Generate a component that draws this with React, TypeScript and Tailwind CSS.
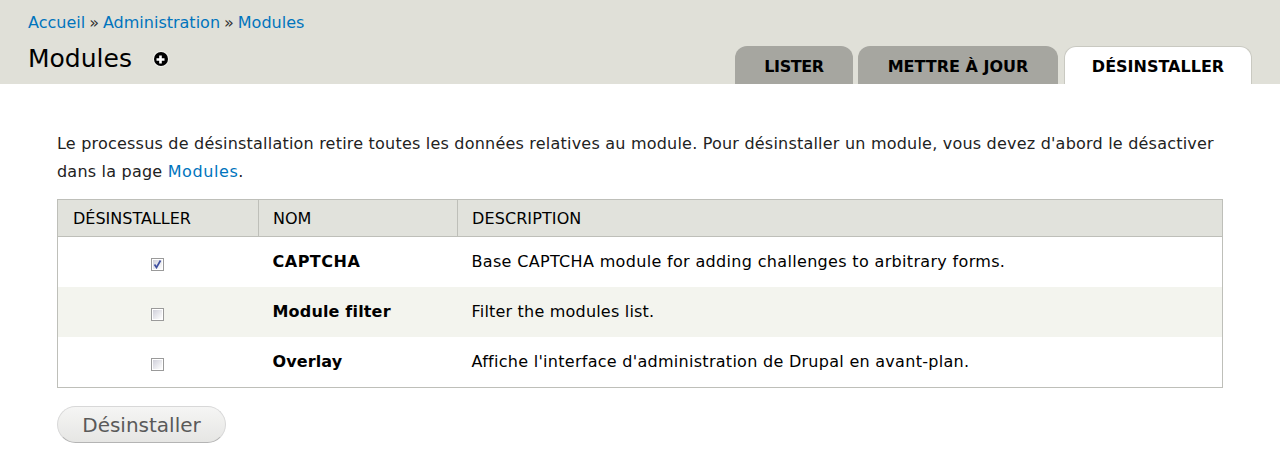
const tabs = [
  { label: "LISTER", width: "w-[118px]", tracking: "tracking-[-0.4px]", active: false },
  { label: "METTRE À JOUR", width: "w-[200px]", tracking: "", active: false },
  { label: "DÉSINSTALLER", width: "ml-[1px] w-[188px]", tracking: "", active: true },
];

const modules = [
  {
    name: "CAPTCHA",
    description: "Base CAPTCHA module for adding challenges to arbitrary forms.",
    checked: true,
    height: "h-[50px]",
    nameTracking: "tracking-[0.5px]",
    descTracking: "tracking-[0.33px]",
  },
  {
    name: "Module filter",
    description: "Filter the modules list.",
    checked: false,
    height: "h-[50px]",
    nameTracking: "tracking-[0.17px]",
    descTracking: "tracking-[0.2px]",
  },
  {
    name: "Overlay",
    description: "Affiche l'interface d'administration de Drupal en avant-plan.",
    checked: false,
    height: "h-[51px]",
    nameTracking: "tracking-[0.12px]",
    descTracking: "tracking-[0.28px]",
  },
];

function Checkbox({ checked }: { checked: boolean }) {
  return (
    <span className="flex h-[13px] w-[13px] border border-[#9a9a9a] bg-white p-[1px]">
      <span className="flex h-full w-full items-center justify-center bg-gradient-to-br from-[#d0d0da] to-white">
        {checked && (
          <svg width="9" height="9" viewBox="0 0 9 9" fill="none" className="shrink-0">
            <path d="M1.5 4.5 L3.5 7.5 L7.5 0.5" stroke="#3f4fa0" strokeWidth="1.7" />
          </svg>
        )}
      </span>
    </span>
  );
}

export default function App() {
  return (
    <div className="h-[475px] w-[1280px] overflow-hidden bg-white font-['DejaVu_Sans',sans-serif] text-[16px] text-black">
      <div className="flex h-[84px] flex-col bg-[#e0e0d8] px-[28px]">
        <div className="flex h-[45px] items-center text-[#0074bd]">
          <a>Accueil</a>
          <span className="mx-[4px] text-[#333]">»</span>
          <a>Administration</a>
          <span className="mx-[4px] text-[#333]">»</span>
          <a>Modules</a>
        </div>
        <div className="flex flex-1 items-end justify-between">
          <div className="flex items-center self-start pt-[1px]">
            <h1 className="text-[25px] leading-[26px] font-normal">Modules</h1>
            <span className="ml-[22px] flex h-[14px] w-[14px] items-center justify-center rounded-full bg-black ring-1 ring-[#f2f2ee]">
              <svg width="9" height="9" viewBox="0 0 9 9">
                <path d="M3.2 0.5h2.6v2.7h2.7v2.6H5.8v2.7H3.2V5.8H0.5V3.2h2.7z" fill="#fff" />
              </svg>
            </span>
          </div>
          <div className="flex gap-[5px]">
            {tabs.map((tab) => (
              <div
                key={tab.label}
                className={`flex h-[38px] items-center justify-center rounded-t-[12px] pt-[3px] font-bold ${tab.width} ${tab.tracking} ${
                  tab.active ? "border border-b-0 border-[#c9c9c1] bg-white" : "bg-[#a6a6a0]"
                }`}
              >
                {tab.label}
              </div>
            ))}
          </div>
        </div>
      </div>

      <div className="px-[57px] pt-[46px]">
        <p className="leading-[28px] tracking-[0.21px] text-[#222]">
          Le processus de désinstallation retire toutes les données relatives au module. Pour désinstaller un module, vous devez d'abord le désactiver dans la page <a className="tracking-[0.6px] text-[#0074bd]">Modules</a>.
        </p>

        <table className="mt-[13px] w-full table-fixed border-collapse border border-[#bebfb9]">
          <thead>
            <tr className="h-[37px] border-b border-[#bebfb9] bg-[#e1e2dc] text-left">
              <th className="w-[201px] border-r border-[#bebfb9] pt-[1px] pl-[15px] font-normal">DÉSINSTALLER</th>
              <th className="w-[199px] border-r border-[#bebfb9] pt-[1px] pl-[14px] font-normal">NOM</th>
              <th className="pt-[1px] pl-[14px] font-normal tracking-[0.1px]">DESCRIPTION</th>
            </tr>
          </thead>
          <tbody>
            {modules.map((mod, i) => (
              <tr key={mod.name} className={`${mod.height} ${i % 2 === 1 ? "bg-[#f3f4ee]" : "bg-white"}`}>
                <td className="pr-[2px]">
                  <div className="flex justify-center pt-[5px]">
                    <Checkbox checked={mod.checked} />
                  </div>
                </td>
                <td className={`pt-[1px] pl-[14px] font-bold ${mod.nameTracking}`}>{mod.name}</td>
                <td className={`pt-[1px] pl-[14px] ${mod.descTracking}`}>{mod.description}</td>
              </tr>
            ))}
          </tbody>
        </table>

        <button className="mt-[18px] flex h-[37px] w-[169px] items-center justify-center rounded-[20px] border border-[#d8d8d8] border-b-[#b4b4b4] bg-gradient-to-b from-[#f5f5f4] to-[#e6e6e4] text-[20px] text-[#5a5a5a]">
          Désinstaller
        </button>
      </div>
    </div>
  );
}
